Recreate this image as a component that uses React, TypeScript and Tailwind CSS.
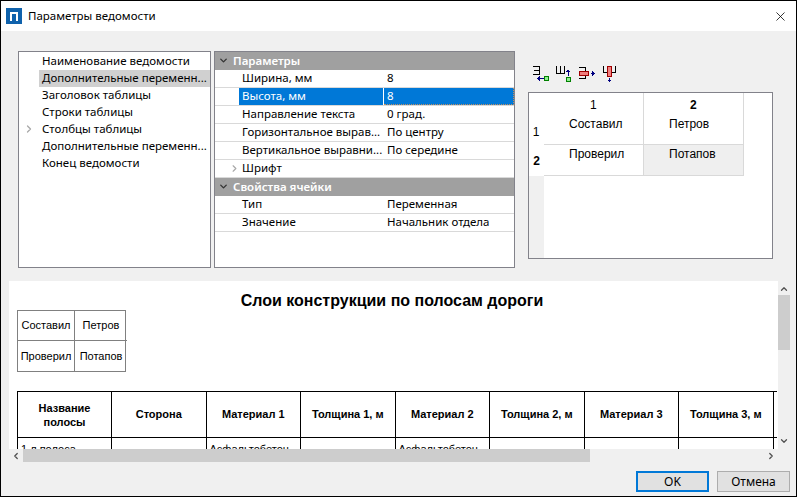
import { ChevronDown, ChevronLeft, ChevronRight, ChevronUp, X } from "lucide-react";

const treeItems = [
  "Наименование ведомости",
  "Дополнительные переменн...",
  "Заголовок таблицы",
  "Строки таблицы",
  "Столбцы таблицы",
  "Дополнительные переменн...",
  "Конец ведомости",
];

const columns = ["Сторона", "Материал 1", "Толщина 1, м", "Материал 2", "Толщина 2, м", "Материал 3", "Толщина 3, м"];

function Toolbar() {
  return (
    <svg width="90" height="18" viewBox="0 0 90 18" className="block" fill="none" shapeRendering="crispEdges">
      <path d="M1 1.500h6.500v8H1M2 5.500h5" stroke="#000" />
      <path d="M6 13.500h6" stroke="#000080" />
      <path d="M8 11l-3 2.500 3 2.500z" fill="#000080" />
      <rect x="12.500" y="11.500" width="4" height="4" fill="#90ee90" stroke="#008000" />
      <path d="M24.500 1v7.500h8V1M28.500 1v7" stroke="#000" />
      <path d="M36 5v6" stroke="#000080" />
      <path d="M36 4l-2.500 3h5z" fill="#000080" />
      <rect x="34.500" y="12.500" width="4" height="4" fill="#90ee90" stroke="#008000" />
      <path d="M47 2.500h6v11h-6" stroke="#000" />
      <rect x="47.500" y="6.500" width="9" height="4" fill="#f08080" stroke="#a00000" />
      <path d="M59 8.500h2" stroke="#000080" />
      <path d="M60 6l3 2.500-3 2.500z" fill="#000080" />
      <path d="M71.500 1v6.500h11.500V1" stroke="#000" />
      <rect x="75.500" y="1.500" width="4" height="10" fill="#f08080" stroke="#a00000" />
      <path d="M77.500 13v2" stroke="#000080" />
      <path d="M75 14.500l2.500 3 2.500-3z" fill="#000080" />
    </svg>
  );
}

function PropRow({ label, value, selected }: { label: string; value: string; selected?: boolean }) {
  return (
    <div className="flex h-[18px] border-b border-[#d9d9d9]">
      <div className="w-[24px] shrink-0" />
      <div className={`flex w-[144px] shrink-0 items-center whitespace-nowrap pb-px pl-[3px] ${selected ? "bg-[#0078d7] text-white" : ""}`}>{label}</div>
      <div className={`ml-px flex flex-1 items-center whitespace-nowrap pb-px pl-[3px] ${selected ? "border-r border-b border-dotted border-[#c09060] bg-[#0078d7] text-white" : "border-l-0"}`}>{value}</div>
    </div>
  );
}

function PropHeader({ title }: { title: string }) {
  return (
    <div className="flex h-[18px] items-center bg-[#a0a0a0] pb-px pl-[3px] font-semibold text-white">
      <ChevronDown size={11} strokeWidth={3} className="mr-[4px] text-[#333]" />
      {title}
    </div>
  );
}

export default function App() {
  return (
    <div className="flex h-[497px] w-[797px] flex-col overflow-hidden border-x border-y border-black bg-[#f0f0f0] font-['Noto_Sans',sans-serif] text-[11.5px] text-black">
      <div className="flex h-[30px] shrink-0 items-center bg-white pl-[5px] pr-[5px]">
        <div className="flex h-[16px] w-[16px] items-center justify-center bg-[#0f62ac]">
          <div className="h-[9px] w-[8px] border-x-2 border-t-2 border-white" />
        </div>
        <span className="ml-[6px] text-[11.5px]">Параметры ведомости</span>
        <X size={15} strokeWidth={1.25} className="ml-auto mr-[3px]" />
      </div>

      <div className="ml-[17px] mt-[20px] flex h-[217px] shrink-0">
        <div className="relative w-[193px] shrink-0 border border-[#82828a] bg-white pt-px">
          {treeItems.map((item, i) => (
            <div key={i} className={`ml-[20px] flex h-[17px] items-center whitespace-nowrap pb-px pl-[3px] ${i === 1 ? "bg-[#d0d0d0]" : ""}`}>
              {item}
            </div>
          ))}
          <ChevronRight size={12} strokeWidth={2.5} className="absolute left-[4px] top-[71px] text-[#a8a8a8]" />
        </div>

        <div className="ml-[3px] w-[301px] shrink-0 border border-[#82828a] bg-white">
          <PropHeader title="Параметры" />
          <PropRow label="Ширина, мм" value="8" />
          <PropRow label="Высота, мм" value="8" selected />
          <PropRow label="Направление текста" value="0 град." />
          <PropRow label="Горизонтальное вырав..." value="По центру" />
          <PropRow label="Вертикальное выравни..." value="По середине" />
          <div className="relative">
            <PropRow label="Шрифт" value="" />
            <ChevronRight size={11} strokeWidth={2.5} className="absolute left-[14px] top-[3px] text-[#a8a8a8]" />
          </div>
          <PropHeader title="Свойства ячейки" />
          <PropRow label="Тип" value="Переменная" />
          <PropRow label="Значение" value="Начальник отдела" />
        </div>

        <div className="ml-[13px] w-[245px] shrink-0 font-['Liberation_Sans',sans-serif] text-[12px]">
          <div className="ml-[4px] mt-[14px] h-[27px]">
            <Toolbar />
          </div>
          <div className="flex h-[167px] border border-[#82828a] bg-white">
            <div className="w-[15px] shrink-0 bg-[#f0f0f0]">
              <div className="h-[83px] bg-white">
                <div className="flex h-[52px] items-end justify-center pb-[4px] pr-px">1</div>
                <div className="flex h-[31px] items-center justify-center font-bold">2</div>
              </div>
            </div>
            <div className="h-[83px] w-[200px]">
              <div className="grid h-[52px] grid-cols-[100px_100px] border-b border-[#d9d9d9]">
                <div className="border-r border-[#d9d9d9]">
                  <div className="h-[22px] pl-[46px] pt-[3px]">1</div>
                  <div className="pl-[25px]">Составил</div>
                </div>
                <div className="border-r border-[#d9d9d9]">
                  <div className="h-[22px] pl-[46px] pt-[3px] font-bold">2</div>
                  <div className="pl-[25px]">Петров</div>
                </div>
              </div>
              <div className="grid h-[31px] grid-cols-[100px_100px] border-b border-[#d9d9d9]">
                <div className="border-r border-[#d9d9d9] pl-[25px]">Проверил</div>
                <div className="border-r border-[#d9d9d9] bg-[#efefef] pl-[25px]">Потапов</div>
              </div>
            </div>
          </div>
        </div>
      </div>

      <div className="ml-[8px] mt-[13px] flex h-[182px] w-[781px] shrink-0 flex-col">
        <div className="flex h-[168px] shrink-0">
          <div className="h-[168px] w-[769px] overflow-hidden bg-white font-['Liberation_Sans',sans-serif]">
            <div className="pr-[3px] pt-[11px] text-center text-[16px] font-bold leading-[18px]">Слои конструкции по полосам дороги</div>
            <div className="ml-[8px] grid w-[109px] grid-cols-[57px_52px] border border-[#808080] text-[11px]">
              <div className="flex h-[30px] items-center justify-center border-b border-r border-[#808080]">Составил</div>
              <div className="flex h-[30px] items-center justify-center border-b border-[#808080]">Петров</div>
              <div className="flex h-[30px] items-center justify-center border-r border-[#808080]">Проверил</div>
              <div className="flex h-[30px] items-center justify-center">Потапов</div>
            </div>
            <div className="ml-[8px] mt-[19px] w-[760px] overflow-hidden border-l border-t border-black">
              <div className="flex h-[46px] border-b border-black text-[11px] font-bold">
                <div className="flex w-[94px] shrink-0 items-center justify-center border-r border-black text-center leading-[14px]">Название<br />полосы</div>
                {columns.map((c) => (
                  <div key={c} className="flex w-[94.5px] shrink-0 items-center justify-center border-r border-black">{c}</div>
                ))}
              </div>
              <div className="flex h-[14px] text-[11px]">
                <div className="w-[94px] shrink-0 border-r border-black pl-[3px] pt-[3px]">1 л.полоса</div>
                <div className="w-[94.5px] shrink-0 border-r border-black" />
                <div className="w-[94.5px] shrink-0 border-r border-black pl-[3px] pt-[3px]">Асфальтобетон</div>
                <div className="w-[94.5px] shrink-0 border-r border-black" />
                <div className="w-[94.5px] shrink-0 border-r border-black pl-[3px] pt-[3px]">Асфальтобетон</div>
                <div className="w-[94.5px] shrink-0 border-r border-black" />
                <div className="w-[94.5px] shrink-0 border-r border-black" />
                <div className="w-[94.5px] shrink-0 border-r border-black" />
              </div>
            </div>
          </div>
          <div className="flex w-[12px] flex-col items-center">
            <ChevronUp size={10} strokeWidth={3} className="mt-[3px] text-[#505050]" />
            <div className="mt-[1px] h-[55px] w-[12px] bg-[#cdcdcd]" />
            <ChevronDown size={10} strokeWidth={3} className="mt-auto mb-[3px] text-[#505050]" />
          </div>
        </div>
        <div className="flex h-[13px] w-[769px] items-center">
          <ChevronLeft size={10} strokeWidth={3} className="ml-[2px] text-[#505050]" />
          <div className="ml-[2px] h-[13px] w-[567px] bg-[#cdcdcd]" />
          <ChevronRight size={10} strokeWidth={3} className="ml-auto mr-[2px] text-[#505050]" />
        </div>
      </div>

      <div className="mr-[6px] mt-[8px] flex justify-end gap-[8px]">
        <button className="h-[21px] w-[73px] border-2 border-[#0078d7] bg-[#e1e1e1] text-[12px]">OK</button>
        <button className="h-[21px] w-[73px] border border-[#adadad] bg-[#e1e1e1] text-[12px]">Отмена</button>
      </div>
    </div>
  );
}
